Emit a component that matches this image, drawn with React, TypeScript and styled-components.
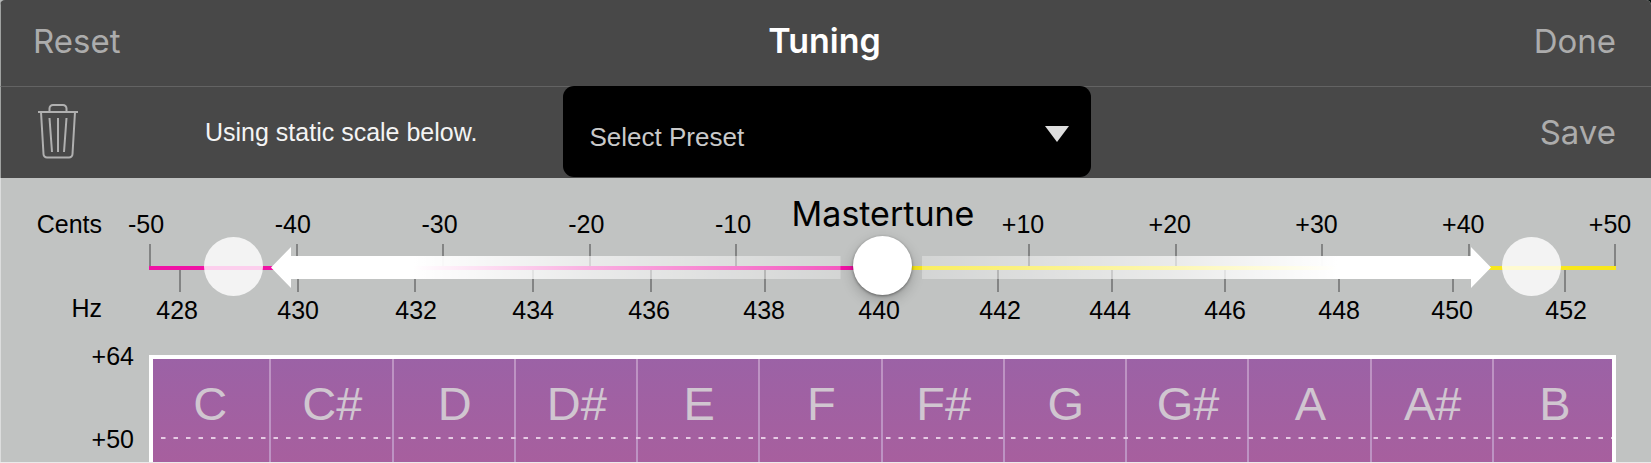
import React, { useState } from 'react';
import styled, { createGlobalStyle, css } from 'styled-components';

const sans = "'Liberation Sans', Arial, sans-serif";
const ui = "Inter, 'Liberation Sans', sans-serif";

const GlobalStyle = createGlobalStyle`
  *, *::before, *::after { box-sizing: border-box; }
  html { background: linear-gradient(to right, #b4b6b5 50%, #06110e 50%); }
  body { margin: 0; font-family: ${sans}; }
`;

const Window = styled.main`
  display: flex;
  flex-direction: column;
  min-height: 100vh;
  border-bottom: 1px solid #ebebeb;
  border-radius: 5px 5px 0 0;
  overflow: hidden;
  background: #c1c3c2;
`;

const bar = css`
  display: grid;
  align-items: center;
  padding: 0 35px 4px 32px;
  border-left: 1px solid #a0a2a1;
  background: #484848;
`;

const TitleBar = styled.header`
  ${bar}
  grid-template-columns: 1fr auto 1fr;
  height: 86px;
`;

const PresetBar = styled.div`
  ${bar}
  grid-template-columns: 1fr calc(32% + 24px) 1fr;
  height: 92px;
  padding: 0 35px 2px 37px;
  border-top: 1px solid #636363;
`;

const Title = styled.h1`
  margin: 0;
  color: #fff;
  font: 600 34px/40px ${ui};
  text-align: center;
`;

const TextButton = styled.button<{ $end?: boolean }>`
  justify-self: ${(p) => (p.$end ? 'end' : 'start')};
  padding: 0;
  border: 0;
  background: none;
  color: #acacac;
  font: 400 33px/40px ${ui};
  cursor: pointer;
`;

const PresetInfo = styled.div`
  display: flex;
  align-items: center;
  gap: 127px;
`;

const IconButton = styled.button`
  display: flex;
  padding: 0 0 2px;
  border: 0;
  background: none;
  color: #b0b0b0;
  cursor: pointer;
`;

const Status = styled.p`
  margin: 0;
  color: #f4f4f4;
  font-size: 25px;
  line-height: 30px;
  white-space: nowrap;
`;

const PresetPicker = styled.div`
  position: relative;
  align-self: start;
  margin-top: -1px;
`;

const PresetSelect = styled.select`
  display: block;
  width: 100%;
  height: 91px;
  padding: 10px 27px 0;
  appearance: none;
  border: 0;
  border-radius: 11px;
  background: #000;
  color: #c9c9c9;
  font: 26px ${sans};
`;

const PickerArrow = styled.svg`
  position: absolute;
  top: 40px;
  right: 22px;
  pointer-events: none;
`;

const Panel = styled.section`
  display: grid;
  flex: 1;
  grid-template-columns: 148px 1fr;
  grid-template-rows: 66px 48px 63px minmax(107px, 1fr);
  padding-right: 35px;
  border-left: 1px solid #dcdddd;
`;

const AxisName = styled.div<{ $raised?: boolean }>`
  padding: ${(p) => (p.$raised ? '2px' : '32px')} 47px 0 0;
  font-size: 25px;
  line-height: 28px;
  text-align: right;
`;

const CentsLabels = styled.div`
  display: flex;
  margin: 0 -24px 0 -33px;
  padding-top: 32px;
`;

const LabelGroup = styled.div`
  display: flex;
  flex: 1;
  justify-content: space-between;
  font-size: 25px;
  line-height: 28px;
`;

const CentsLabel = styled.span`
  width: 60px;
  text-align: center;
`;

const SliderLabel = styled.label`
  display: flex;
  justify-content: center;
  width: 180px;
  margin: -16px 20px 0 30px;
  font: 400 34px/40px ${ui};
`;

const Ruler = styled.div`
  position: relative;
  grid-column: 2;
  display: grid;
  grid-template-rows: 22px 4px 22px;
`;

const CentsTicks = styled.div`
  display: flex;
  justify-content: space-between;
`;

const CentsTick = styled.i`
  width: 2px;
  background: #838484;
`;

const Line = styled.div`
  background: linear-gradient(to right, #f012a5 50%, #f8e71c 50%);
`;

const Columns = styled.div<{ $weights: number[] }>`
  display: grid;
  grid-template-columns: ${(p) => p.$weights.map((w) => `${w}fr`).join(' ')};
`;

const HzTick = styled.i`
  border-right: 2px solid #838484;
`;

const HzLabels = styled(Columns)`
  padding-top: 4px;
  font-size: 25px;
  line-height: 28px;
  text-align: right;
`;

const Sweep = styled.div<{ $side: 'down' | 'up' }>`
  position: absolute;
  top: 3px;
  height: 41px;
  ${(p) =>
    p.$side === 'down'
      ? css`
          left: 122px;
          right: calc(50% + 42px);
          background: linear-gradient(to right, #fff 25%, rgba(255, 255, 255, 0.66) 56%, rgba(255, 255, 255, 0.3));
          clip-path: polygon(0 50%, 20px 0, 20px 9px, 100% 9px, 100% 32px, 20px 32px, 20px 100%);
        `
      : css`
          left: calc(50% + 39px);
          right: 125px;
          background: linear-gradient(to left, #fff 27%, rgba(255, 255, 255, 0.66) 56%, rgba(255, 255, 255, 0.3));
          clip-path: polygon(100% 50%, calc(100% - 20px) 0, calc(100% - 20px) 9px, 0 9px, 0 32px, calc(100% - 20px) 32px, calc(100% - 20px) 100%);
        `}
`;

const Slider = styled.input`
  position: absolute;
  top: -8px;
  left: 0;
  width: 100%;
  height: 59px;
  margin: 0;
  appearance: none;
  background: none;

  &::-webkit-slider-thumb {
    appearance: none;
    width: 59px;
    height: 59px;
    border-radius: 50%;
    background: #fff;
    box-shadow: 0 5px 13px rgba(0, 0, 0, 0.22), 0 1px 3px rgba(0, 0, 0, 0.4);
  }
`;

const NudgeButton = styled.button<{ $side: 'left' | 'right' }>`
  position: absolute;
  top: -7px;
  ${(p) => p.$side}: 55px;
  width: 59px;
  height: 59px;
  padding: 0;
  border: 0;
  border-radius: 50%;
  background: rgba(255, 255, 255, 0.8);
`;

const OffsetLabels = styled.div`
  display: flex;
  flex-direction: column;
  gap: 55px;
  margin-top: -13px;
  padding-right: 15px;
  font-size: 25px;
  line-height: 28px;
  text-align: right;
`;

const NoteGrid = styled.div`
  position: relative;
  display: grid;
  grid-template-columns: repeat(12, 1fr);
  background: linear-gradient(#9b62a6, #a75f9e);

  &::after {
    content: '';
    position: absolute;
    inset: 0;
    border: 4px solid #fff;
    border-bottom: 0;
    pointer-events: none;
  }
`;

const GuideLine = styled.svg`
  position: absolute;
  top: 82px;
  left: 12px;
  width: calc(100% - 16px);
  height: 2px;
`;

const Note = styled.div`
  padding: 22px 0 0 2px;
  border-right: 2px solid #bd93c3;
  color: #d0c6d0;
  font-size: 47px;
  line-height: 54px;
  text-align: center;
`;

const FLAT_CENTS = ['-50', '-40', '-30', '-20', '-10'];
const SHARP_CENTS = ['+10', '+20', '+30', '+40', '+50'];
const HERTZ = [428, 430, 432, 434, 436, 438, 440, 442, 444, 446, 448, 450, 452];
const NOTES = ['C', 'C#', 'D', 'D#', 'E', 'F', 'F#', 'G', 'G#', 'A', 'A#', 'B'];

// Relative widths of the space before each frequency, and after the last one.
const HZ_TICK_WEIGHTS = [32, 118, 117, 118, 118, 114, 117, 116, 114, 113, 114, 114, 112, 50];
const HZ_LABEL_WEIGHTS = [49, 121, 118, 117, 116, 115, 115, 121, 110, 115, 114, 113, 114, 29];

function TrashIcon() {
  return (
    <svg width="40" height="56" viewBox="0 0 40 56" fill="none" stroke="currentColor" strokeWidth="2" aria-hidden="true">
      <path d="M0 9H40" />
      <path d="M11.5 9V5.500a3.500 3.500 0 0 1 3.500-3.500h10a3.500 3.500 0 0 1 3.500 3.500V9" />
      <path d="M3 9L5.500 51a3.500 3.500 0 0 0 3.500 3.500h22a3.500 3.500 0 0 0 3.500-3.500L37 9" />
      <path d="M11.500 15L14 49M20 15V49M28.500 15L26 49" />
    </svg>
  );
}

export default function App() {
  const [cents, setCents] = useState(0);
  const nudge = (by: number) => setCents((c) => Math.max(-50, Math.min(50, c + by)));

  return (
    <>
      <GlobalStyle />
      <Window>
        <TitleBar>
          <TextButton type="button">Reset</TextButton>
          <Title>Tuning</Title>
          <TextButton type="button" $end>Done</TextButton>
        </TitleBar>

        <PresetBar>
          <PresetInfo>
            <IconButton type="button" aria-label="Delete preset"><TrashIcon /></IconButton>
            <Status>Using static scale below.</Status>
          </PresetInfo>
          <PresetPicker>
            <PresetSelect aria-label="Preset">
              <option>Select Preset</option>
            </PresetSelect>
            <PickerArrow width="24" height="16" viewBox="0 0 24 16" aria-hidden="true">
              <path d="M0 0H24L12 16Z" fill="#dedede" />
            </PickerArrow>
          </PresetPicker>
          <TextButton type="button" $end>Save</TextButton>
        </PresetBar>

        <Panel>
          <AxisName>Cents</AxisName>
          <CentsLabels>
            <LabelGroup>{FLAT_CENTS.map((c) => <CentsLabel key={c}>{c}</CentsLabel>)}</LabelGroup>
            <SliderLabel htmlFor="mastertune">Mastertune</SliderLabel>
            <LabelGroup>{SHARP_CENTS.map((c) => <CentsLabel key={c}>{c}</CentsLabel>)}</LabelGroup>
          </CentsLabels>

          <Ruler>
            <CentsTicks>{Array.from({ length: 11 }, (_, i) => <CentsTick key={i} />)}</CentsTicks>
            <Line />
            <Columns $weights={HZ_TICK_WEIGHTS}>{HERTZ.map((h) => <HzTick key={h} />)}</Columns>
            <Sweep $side="down" />
            <Sweep $side="up" />
            <Slider
              id="mastertune"
              type="range"
              min={-50}
              max={50}
              value={cents}
              onChange={(e) => setCents(Number(e.target.value))}
            />
            <NudgeButton type="button" $side="left" aria-label="Lower" onClick={() => nudge(-1)} />
            <NudgeButton type="button" $side="right" aria-label="Raise" onClick={() => nudge(1)} />
          </Ruler>

          <AxisName $raised>Hz</AxisName>
          <HzLabels $weights={HZ_LABEL_WEIGHTS}>{HERTZ.map((h) => <span key={h}>{h}</span>)}</HzLabels>

          <OffsetLabels>
            <span>+64</span>
            <span>+50</span>
          </OffsetLabels>
          <NoteGrid>
            {NOTES.map((n) => <Note key={n}>{n}</Note>)}
            <GuideLine aria-hidden="true">
              <line x1="0" y1="1" x2="100%" y2="1" stroke="#e6cbe4" strokeWidth="2" strokeDasharray="4.500 8" />
            </GuideLine>
          </NoteGrid>
        </Panel>
      </Window>
    </>
  );
}
